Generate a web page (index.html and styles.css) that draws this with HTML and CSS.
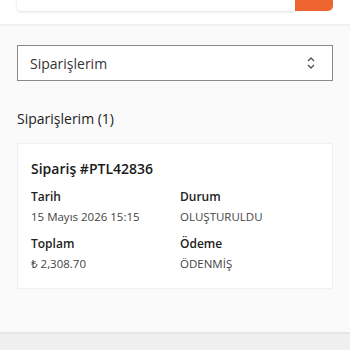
FILE: index.html
```html
<!DOCTYPE html>
<html lang="tr">
<head>
  <meta charset="UTF-8" />
  <meta name="viewport" content="width=device-width, initial-scale=1.0"/>
  <title>Siparişlerim</title>
  <link rel="stylesheet" href="styles.css">
</head>
<body>
  <header class="top-bar">
    <div class="search">
      <div class="search-input"></div>
      <button type="button" class="search-button"></button>
    </div>
  </header>

  <main class="content">
    <div class="select-box">
      <span>Siparişlerim</span>
      <svg class="chevrons" width="10" height="14" viewBox="0 0 10 14">
        <path d="M2 5 L5 2 L8 5" fill="none" stroke="#555" stroke-width="1.4"/>
        <path d="M2 9 L5 12 L8 9" fill="none" stroke="#555" stroke-width="1.4"/>
      </svg>
    </div>

    <h3 class="section-title">Siparişlerim (1)</h3>

    <div class="order-card">
      <h4 class="order-title">Sipariş #PTL42836</h4>
      <div class="order-grid">
        <div class="field">
          <div class="field-label">Tarih</div>
          <div class="field-value">15 Mayıs 2026 15:15</div>
        </div>
        <div class="field">
          <div class="field-label">Durum</div>
          <div class="field-value">OLUŞTURULDU</div>
        </div>
        <div class="field">
          <div class="field-label">Toplam</div>
          <div class="field-value">₺ 2,308.70</div>
        </div>
        <div class="field">
          <div class="field-label">Ödeme</div>
          <div class="field-value">ÖDENMİŞ</div>
        </div>
      </div>
    </div>
  </main>

  <footer class="bottom-bar"></footer>
</body>
</html>
```

FILE: styles.css
```css
body {
  margin: 0;
  font-family: 'Open Sans', 'Noto Sans', sans-serif;
  background: #fafafa;
  color: #222;
  height: 350px;
  overflow: hidden;
  display: flex;
  flex-direction: column;
}

.top-bar {
  background: white;
  height: 24px;
  border-bottom: 2px solid #f1f1f1;
  padding: 0 17px;
}

.search {
  display: flex;
  height: 11px;
}

.search-input {
  flex: 1;
  background: white;
  border-radius: 0 0 0 4px;
  box-shadow: 0 1px 3px rgba(0,0,0,0.12);
}

.search-button {
  width: 38px;
  border: none;
  background: #ee6530;
  border-radius: 0 0 5px 0;
}

.content {
  flex: 1;
  padding: 19px 17px 0;
}

.select-box {
  height: 34px;
  border: 1px solid #8a8a8a;
  background: white;
  display: flex;
  align-items: center;
  justify-content: space-between;
  padding: 0 16px 0 12px;
  font-size: 14px;
  color: #333;
}

.section-title {
  margin: 28px 0 0;
  font-size: 14px;
  font-weight: 500;
  color: #222;
}

.order-card {
  margin-top: 15px;
  background: white;
  border: 1px solid #f0f0f0;
  padding: 15px 13px 17px;
}

.order-title {
  margin: 0 0 10px;
  font-size: 14px;
  font-weight: 600;
  color: #1a1a1a;
}

.order-grid {
  display: grid;
  grid-template-columns: 149px 1fr;
  row-gap: 11px;
}

.field-label {
  font-size: 12px;
  font-weight: 600;
  color: #222;
}

.field-value {
  margin-top: 4px;
  font-size: 11.5px;
  color: #444;
}

.bottom-bar {
  height: 16px;
  background: #f0f0f0;
  border-top: 2px solid #e6e6e6;
}
```
